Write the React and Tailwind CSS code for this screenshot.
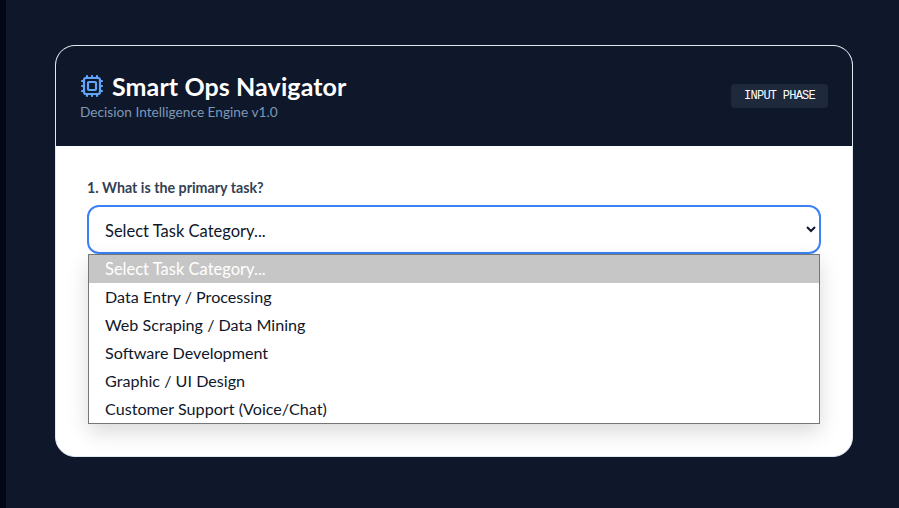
import React from 'react';
import { Cpu } from 'lucide-react';

const options = [
  'Data Entry / Processing',
  'Web Scraping / Data Mining',
  'Software Development',
  'Graphic / UI Design',
  'Customer Support (Voice/Chat)',
];

export default function App() {
  return (
    <div className="flex h-[508px] w-[899px] overflow-hidden bg-[#0f172a] font-['Lato','Noto_Sans',sans-serif]">
      <div className="w-[6px] shrink-0 bg-[#020617]" />
      <main className="flex-1 pl-[49px] pr-[46px] pt-[45px]">
        <div className="h-[412px] overflow-hidden rounded-[20px] border border-[#e2e8f0] bg-white">
          <header className="flex h-[100px] items-center justify-between bg-[#0f172a] px-6">
            <div>
              <div className="flex items-center gap-2">
                <Cpu size={24} strokeWidth={2.2} className="text-[#60a5fa]" />
                <h1 className="text-[25px] leading-8 font-bold tracking-[0.1px] text-white">Smart Ops Navigator</h1>
              </div>
              <p className="text-[13.7px] leading-5 text-[#7d99b8]">Decision Intelligence Engine v1.0</p>
            </div>
            <span className="rounded bg-[#1e293b] px-[13px] py-1 font-['Liberation_Mono',monospace] text-[12px] leading-4 tracking-[-0.75px] text-white">
              INPUT PHASE
            </span>
          </header>

          <div className="px-[31px] pt-[32px]">
            <label className="mb-[7px] block text-[14.25px] leading-5 font-bold text-[#334155]">
              1. What is the primary task?
            </label>
            <div className="relative">
              <select className="h-[49px] w-full rounded-xl border-2 border-[#3b82f6] bg-white pt-[2px] pr-[15px] pl-[12px] text-[16.5px] text-[#0f172a] outline-none">
                <option>Select Task Category...</option>
              </select>
              <ul className="absolute top-[49px] right-px left-px border border-[#767676] bg-white text-[16.15px] text-[#0f172a] shadow-[0_8px_20px_rgba(0,0,0,0.15)]">
                <li className="flex h-[28px] items-center bg-[#c6c6c6] px-4 pt-px text-[16.5px] text-white">Select Task Category...</li>
                {options.map((opt) => (
                  <li key={opt} className="flex h-[28px] items-center px-4">
                    {opt}
                  </li>
                ))}
              </ul>
            </div>
          </div>
        </div>
      </main>
    </div>
  );
}
